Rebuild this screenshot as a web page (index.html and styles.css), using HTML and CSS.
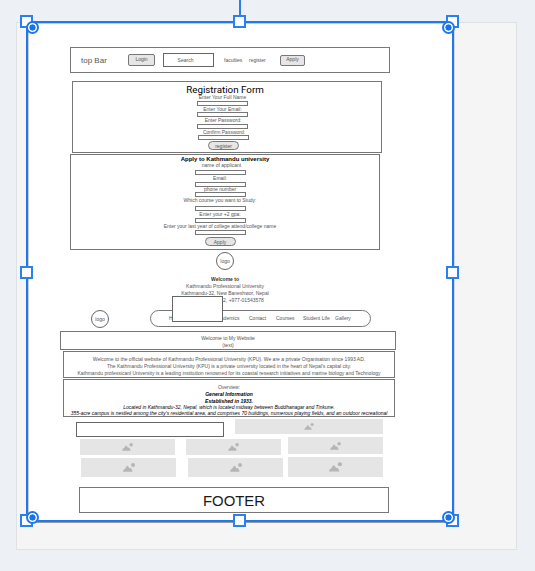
FILE: index.html
```
<!DOCTYPE html>
<html lang="en">
<head>
<meta charset="utf-8">
<title>Wireframe</title>
<link rel="stylesheet" href="styles.css">
</head>
<body>
<svg width="0" height="0" class="defs"><symbol id="pic" viewBox="0 0 40 30"><path d="M0 29Q0 21 8 18L12 11Q14 8 17 11L22 18Q26 15 29 21L32 29Z"/><circle cx="33.500" cy="6.500" r="6.500"/></symbol></svg>
<div class="board">
<main class="page">
  <header class="topbar box">
    <span class="brand">top Bar</span>
    <span class="btn login">Login</span>
    <span class="search">Search</span>
    <span class="link faculties">faculties</span>
    <span class="link register">register</span>
    <span class="btn apply-top">Apply</span>
  </header>

  <section class="registration box">
    <h1>Registration Form</h1>
    <div class="label l-name">Enter Your Full Name</div><div class="field"></div>
    <div class="label l-mail">Enter Your Email:</div><div class="field"></div>
    <div class="label l-pass">Enter Password:</div><div class="field"></div>
    <div class="label l-conf">Confirm Password:</div><div class="field last"></div>
    <div class="pill">register</div>
  </section>

  <section class="application box">
    <h2>Apply to Kathmandu university</h2>
    <div class="label a-name">name of applicant</div><div class="field"></div>
    <div class="label a-mail">Email:</div><div class="field"></div>
    <div class="label a-phone">phone number</div><div class="field"></div>
    <div class="label a-course">Which course you want to Study:</div><div class="field"></div>
    <div class="label a-gpa">Enter your +2 gpa:</div><div class="field"></div>
    <div class="label a-last">Enter your last year of college attend/college name</div><div class="field"></div>
    <div class="pill">Apply</div>
  </section>

  <div class="logo main-logo">logo</div>
  <section class="address">
    <b>Welcome to</b>
    <span>Kathmandu Professional University</span>
    <span>Kathmandu-32, New Baneshwor, Nepal</span>
    <span class="phone">01-5154322, +977-01543578</span>
  </section>

  <div class="navrow">
    <div class="logo">logo</div>
    <nav>
      <span class="n-home">Home</span><span class="n-acad">Academics</span><span class="n-cont">Contact</span><span class="n-cour">Courses</span><span class="n-life">Student Life</span><span class="n-gal">Gallery</span>
    </nav>
    <div class="popup"></div>
  </div>

  <section class="welcome box"><span>Welcome to My Website</span><span>(text)</span></section>
  <section class="info box">
    <span class="i1">Welcome to the official website of Kathmandu Professional University (KPU). We are a private Organisation since 1993 AD.</span>
    <span class="i2">The Kathmandu Professional University (KPU) is a private university located in the heart of Nepal's capital city.</span>
    <span class="i3">Kathmandu professicanl University is a leading institution renowned for its coastal research initiatives and marine biology and Technology</span>
  </section>
  <section class="overview box">
    <span class="o1">Overview:</span>
    <b class="o2">General Information</b>
    <b class="o3">Established in 1933.</b>
    <em class="o4">Located in Kathmandu-32, Nepal, which is located midway between Buddhanagar and Tinkune.</em>
    <em class="o5">355-acre campus is nestled among the city's residential area, and comprises 70 buildings, numerous playing fields, and an outdoor recreational</em>
  </section>

  <section class="gallery">
    <div class="col wide">
      <div class="blank"></div>
      <div class="pair">
        <div class="tile"><svg class="mid"><use href="#pic"/></svg></div>
        <div class="tile"><svg class="mid"><use href="#pic"/></svg></div>
      </div>
      <div class="pair low">
        <div class="tile"><svg class="big"><use href="#pic"/></svg></div>
        <div class="tile"><svg class="big"><use href="#pic"/></svg></div>
      </div>
    </div>
    <div class="col">
      <div class="tile banner"><svg class="small"><use href="#pic"/></svg></div>
      <div class="tile second"><svg class="mid"><use href="#pic"/></svg></div>
      <div class="tile third"><svg class="large"><use href="#pic"/></svg></div>
    </div>
  </section>

  <footer class="box">FOOTER</footer>

  <i class="stem"></i>
  <i class="handle top left"></i><i class="handle top center"></i><i class="handle top right"></i>
  <i class="handle middle left"></i><i class="handle middle right"></i>
  <i class="handle bottom left"></i><i class="handle bottom center"></i><i class="handle bottom right"></i>
  <i class="knob k-top k-left"></i><i class="knob k-top k-right"></i>
  <i class="knob k-bottom k-left"></i><i class="knob k-bottom k-right"></i>
</main>
</div>
</body>
</html>
```
FILE: styles.css
```
* { box-sizing: border-box; }
body {
  margin: 0;
  height: 571px;
  padding: 22px 0 0 16px;
  background: #edf0f5;
  font: 5px/7px "Liberation Sans", Arial, sans-serif;
  color: #555;
  overflow: hidden;
  white-space: nowrap;
}
.defs { display: block; height: 0; }
.board {
  width: 501px;
  height: 528px;
  border: 1px solid #dfe2e5;
  background: #f5f5f5;
  padding-left: 9px;
}
.page {
  position: relative;
  width: 428px;
  height: 501px;
  margin-top: -2px;
  border: 2px solid #1f78ee;
  background: #fff;
  box-shadow: inset 1px 1px 0 #ccc, 0 1px 0 #999, 1px 0 0 #d5d9e0;
  display: flex;
  flex-direction: column;
  align-items: flex-start;
}
.page > * { flex-shrink: 0; }
.box { border: 1px solid #777; }

.topbar {
  display: flex;
  align-items: center;
  width: 320px;
  height: 26px;
  margin: 24px 0 0 42px;
}
.brand { width: 57px; padding: 2px 0 0 10px; font-size: 8px; line-height: 12px; }
.btn {
  border: 1px solid #777;
  border-radius: 2px;
  background: #e6e6e6;
  text-align: center;
}
.login { width: 27px; height: 12px; line-height: 9px; }
.search {
  width: 51px;
  height: 14px;
  margin-left: 8px;
  padding-right: 6px;
  border: 1px solid #666;
  text-align: center;
  line-height: 13px;
}
.link { padding-top: 1px; }
.faculties { width: 25px; margin-left: 10px; }
.register { width: 31px; }
.apply-top { width: 25px; height: 11px; line-height: 6px; }

.registration, .application {
  display: flex;
  flex-direction: column;
  align-items: center;
}
.registration { width: 310px; height: 72px; margin: 8px 0 0 44px; padding-right: 9px; }
h1 {
  height: 12px;
  margin: 0 0 0 5px;
  font-family: Roboto, "Liberation Sans", sans-serif;
  font-size: 9.8px;
  font-weight: 400;
  line-height: 16px;
  color: #000;
}
.label { height: 7px; line-height: 7px; }
.field { width: 51px; height: 5px; border: 1px solid #777; background: #fff; }
.l-name { height: 7px; }
.l-mail { height: 6px; }
.l-pass { margin-left: 1px; }
.l-conf { height: 6px; margin-left: 3px; }
.field.last { margin-left: 2px; }
.pill {
  width: 31px;
  height: 9px;
  border: 1px solid #777;
  border-radius: 5px;
  background: #e6e6e6;
  text-align: center;
  line-height: 8px;
}
.registration .pill { margin: 1px 0 0 2px; }

.application { width: 310px; height: 96px; margin: 1px 0 0 42px; padding-right: 10px; }
h2 {
  height: 7px;
  margin: 0 0 0 10px;
  font-size: 6px;
  font-weight: 700;
  line-height: 8px;
  color: #000;
}
.application .label { margin-left: 0; }
.a-name { height: 8px; }
.application .a-name { margin-left: 3px; }
.a-phone { height: 5px; line-height: 5px; }
.a-course { height: 9px; line-height: 7px; }
.a-last { height: 7px; }
.application .pill { margin-top: 2px; }

.logo {
  width: 18px;
  height: 18px;
  border: 1px solid #666;
  border-radius: 50%;
  text-align: center;
  line-height: 17px;
}
.main-logo { margin: 2px 0 0 188px; }
.address {
  display: flex;
  flex-direction: column;
  align-items: center;
  width: 140px;
  height: 34px;
  margin: 6px 0 0 127px;
}
.address b { color: #333; }
.address .phone { margin-left: 13px; }

.navrow { position: relative; display: flex; align-items: center; width: 426px; height: 17px; padding-left: 63px; }
nav {
  display: flex;
  width: 221px;
  height: 17px;
  margin-left: 41px;
  padding-left: 18px;
  border: 1px solid #777;
  border-radius: 9px;
  line-height: 14px;
}
.n-home { width: 46px; }
.n-acad { width: 34px; }
.n-cont { width: 27px; }
.n-cour { width: 27px; }
.n-life { width: 32px; }
.popup {
  position: absolute;
  left: 144px;
  top: -14px;
  width: 51px;
  height: 26px;
  border: 1px solid #666;
  background: #fff;
}

.welcome, .info, .overview { display: flex; flex-direction: column; align-items: center; }
.welcome { width: 336px; height: 19px; margin: 4px 0 0 32px; padding-top: 3px; }
.info { width: 332px; height: 27px; margin: 1px 0 0 35px; padding-top: 4px; }
.info .i3 { line-height: 6px; }
.overview { width: 332px; height: 38px; margin: 1px 0 0 35px; padding-top: 4px; }
.overview b, .overview em { font-style: italic; color: #000; }
.overview .o3 { line-height: 6px; }
.overview .o5 { line-height: 5px; }

.gallery { display: flex; height: 58px; margin: 2px 0 0 48px; }
.col.wide { width: 211px; }
.col { width: 148px; display: flex; flex-direction: column; align-items: flex-end; }
.col.wide { align-items: flex-start; margin-right: -52px; }
.blank { width: 148px; height: 15px; margin-top: 3px; border: 1px solid #666; }
.pair { display: flex; gap: 11px; margin: 2px 0 0 4px; }
.pair .tile { height: 16px; }
.pair.low { gap: 12px; margin: 3px 0 0 5px; }
.pair.low .tile { height: 19px; }
.tile {
  flex: none;
  display: flex;
  align-items: center;
  justify-content: center;
  width: 95px;
  background: #e5e5e5;
  fill: #b5b5b5;
}
.banner { width: 148px; height: 15px; }
.second { height: 17px; margin-top: 3px; }
.third { height: 20px; margin-top: 3px; }
.small { width: 10px; height: 7px; }
.mid { width: 11px; height: 8px; }
.big { width: 12px; height: 9px; }
.large { width: 13px; height: 10px; }

footer {
  width: 310px;
  height: 26px;
  margin: 10px 0 0 51px;
  text-align: center;
  font-size: 14.9px;
  line-height: 26px;
  color: #1a1a1a;
}

.stem { position: absolute; left: 211px; top: -24px; width: 2px; height: 18px; background: #2b7ef0; }
.handle {
  position: absolute;
  width: 13px;
  height: 13px;
  border: 2px solid #2a7ff3;
  background: #fff;
}
.top { top: -8px; }
.middle { top: 243px; }
.bottom { top: 491px; }
.left { left: -8px; }
.center { left: 205px; }
.right { left: 418px; }
.knob {
  position: absolute;
  width: 13px;
  height: 13px;
  border: 2px solid #1f78ee;
  border-radius: 50%;
  background: radial-gradient(circle, #1473f0 2.800px, #fff 3.400px);
}
.k-top { top: -2px; }
.k-bottom { top: 488px; }
.k-left { left: -2px; }
.k-right { left: 414px; }
```
